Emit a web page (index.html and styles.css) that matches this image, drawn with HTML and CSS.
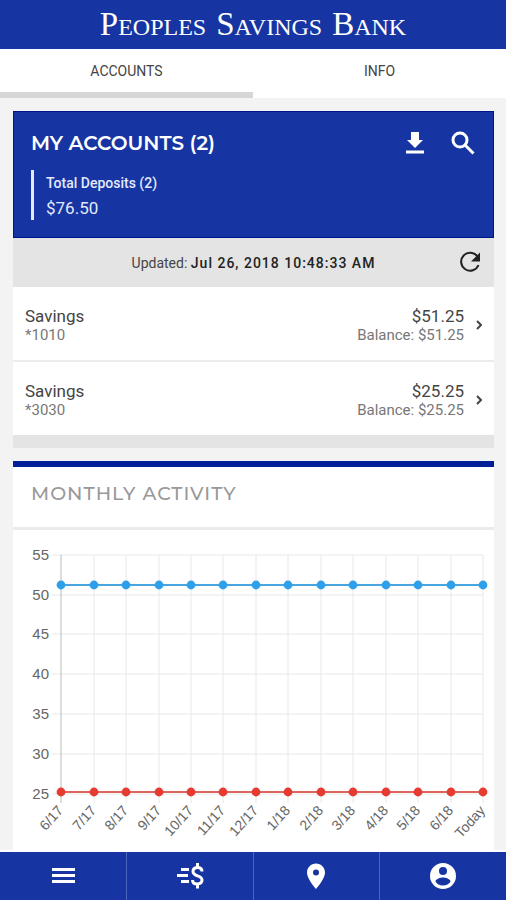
FILE: index.html
```html
<!DOCTYPE html>
<html lang="en">
<head>
<meta charset="utf-8">
<meta name="viewport" content="width=device-width, initial-scale=1">
<title>Peoples Savings Bank</title>
<link rel="stylesheet" href="styles.css">
</head>
<body>
<header class="brand">
  <span><span class="brand-cap">P</span>EOPLES</span>
  <span><span class="brand-cap">S</span>AVINGS</span>
  <span><span class="brand-cap">B</span>ANK</span>
</header>
<nav class="tabs" aria-label="Sections">
  <a class="tab tab-active" href="#accounts">ACCOUNTS</a>
  <a class="tab" href="#info">INFO</a>
</nav>
<main class="content">
  <section class="accounts" id="accounts">
    <div class="summary">
      <div class="summary-head">
        <h1 class="summary-title">MY ACCOUNTS (2)</h1>
        <button class="icon-button" type="button" aria-label="Download">
          <svg class="icon" viewBox="0 0 24 24"><path d="M8 1h8v8h4l-8 8-8-8h4zM3 19.500h18v3H3z"/></svg>
        </button>
        <button class="icon-button" type="button" aria-label="Search">
          <svg class="icon icon-line" viewBox="0 0 24 24"><circle cx="9" cy="9" r="7"/><path d="M14 14l8.500 8.500"/></svg>
        </button>
      </div>
      <div class="totals">
        <div class="totals-label">Total Deposits (2)</div>
        <div class="totals-value">$76.50</div>
      </div>
    </div>
    <div class="updated">
      <p class="updated-text">Updated: <strong class="updated-time">Jul 26, 2018 10:48:33 AM</strong></p>
      <button class="icon-button refresh" type="button" aria-label="Refresh">
        <svg class="icon icon-refresh" viewBox="0 0 24 24"><path class="arc" d="M19.500 5.500A9 9 0 1 0 20.500 14"/><path d="M22 1.500v9h-9z"/></svg>
      </button>
    </div>
    <a class="account" href="#1010">
      <span class="account-side"><span class="account-main">Savings</span><span class="account-sub">*1010</span></span>
      <span class="account-side account-right"><span class="account-main">$51.25</span><span class="account-sub">Balance: $51.25</span></span>
      <svg class="chevron" viewBox="0 0 6 10"><path d="M1 1l4 4-4 4"/></svg>
    </a>
    <a class="account" href="#3030">
      <span class="account-side"><span class="account-main">Savings</span><span class="account-sub">*3030</span></span>
      <span class="account-side account-right"><span class="account-main">$25.25</span><span class="account-sub">Balance: $25.25</span></span>
      <svg class="chevron" viewBox="0 0 6 10"><path d="M1 1l4 4-4 4"/></svg>
    </a>
    <div class="accounts-foot"></div>
  </section>
  <section class="activity">
    <h2 class="activity-title">MONTHLY ACTIVITY</h2>
    <svg class="chart" viewBox="0 0 481 320" role="img" aria-label="Monthly activity">
      <defs>
        <marker id="dot-blue" viewBox="0 0 12 12" refX="6" refY="6" markerWidth="12" markerHeight="12" markerUnits="userSpaceOnUse"><circle class="dot-blue" cx="6" cy="6" r="4.400"/></marker>
        <marker id="dot-red" viewBox="0 0 12 12" refX="6" refY="6" markerWidth="12" markerHeight="12" markerUnits="userSpaceOnUse"><circle class="dot-red" cx="6" cy="6" r="4.400"/></marker>
      </defs>
      <path class="grid" d="M39 25H470M39 65H470M39 104H470M39 144H470M39 184H470M39 224H470M39 264H470M81 25V273M113 25V273M146 25V273M178 25V273M210 25V273M243 25V273M275 25V273M308 25V273M340 25V273M373 25V273M405 25V273M438 25V273M470 25V273"/>
      <path class="axis" d="M48 25V273"/>
      <polyline class="series-blue" points="48,55 81,55 113,55 146,55 178,55 210,55 243,55 275,55 308,55 340,55 373,55 405,55 438,55 470,55"/>
      <polyline class="series-red" points="48,262 81,262 113,262 146,262 178,262 210,262 243,262 275,262 308,262 340,262 373,262 405,262 438,262 470,262"/>
      <g class="y-labels">
        <text x="36" y="30">55</text><text x="36" y="70">50</text><text x="36" y="109">45</text><text x="36" y="149">40</text><text x="36" y="189">35</text><text x="36" y="229">30</text><text x="36" y="269">25</text>
      </g>
      <g class="x-labels">
        <text transform="translate(51 281) rotate(-48)">6/17</text>
        <text transform="translate(84 281) rotate(-48)">7/17</text>
        <text transform="translate(116 281) rotate(-48)">8/17</text>
        <text transform="translate(149 281) rotate(-48)">9/17</text>
        <text transform="translate(181 281) rotate(-48)">10/17</text>
        <text transform="translate(213 281) rotate(-48)">11/17</text>
        <text transform="translate(246 281) rotate(-48)">12/17</text>
        <text transform="translate(278 281) rotate(-48)">1/18</text>
        <text transform="translate(311 281) rotate(-48)">2/18</text>
        <text transform="translate(343 281) rotate(-48)">3/18</text>
        <text transform="translate(376 281) rotate(-48)">4/18</text>
        <text transform="translate(408 281) rotate(-48)">5/18</text>
        <text transform="translate(441 281) rotate(-48)">6/18</text>
        <text transform="translate(473 281) rotate(-48)">Today</text>
      </g>
    </svg>
  </section>
</main>
<nav class="bottom-nav" aria-label="Main">
  <a class="nav-item" href="#menu" aria-label="Menu">
    <svg class="nav-icon" viewBox="0 0 28 28"><path d="M3 6h23v3H3zM3 12h23v3H3zM3 18h23v3H3z"/></svg>
  </a>
  <a class="nav-item" href="#transfer" aria-label="Transfer money">
    <svg class="nav-icon" viewBox="0 0 28 28"><path d="M5 6h8v3H5zM1 12h11v3H1zM5 18h8v3H5z"/><path class="dollar" d="M26 9.500C26 7 24.500 5.500 21.500 5.500S17 7 17 9.500c0 5.600 9 3 9 8.600 0 2.700-2 3.900-4.700 3.900S16.500 21 16.500 18M21.500 1V6M21.500 22v4.500"/></svg>
  </a>
  <a class="nav-item" href="#locations" aria-label="Locations">
    <svg class="nav-icon" viewBox="0 0 28 28"><path fill-rule="evenodd" d="M14 1.500c-5 0-9 4-9 9 0 6.500 9 16.500 9 16.500s9-10 9-16.500c0-5-4-9-9-9zm0 6a3 3 0 1 1 0 6 3 3 0 0 1 0-6z"/></svg>
  </a>
  <a class="nav-item" href="#profile" aria-label="Profile">
    <svg class="nav-icon" viewBox="0 0 28 28"><path fill-rule="evenodd" d="M14 1a13 13 0 1 0 0 26 13 13 0 0 0 0-26zm0 4a4 4 0 1 1 0 8 4 4 0 0 1 0-8zm0 18.500c-3.300 0-6-1.500-7.500-4 0-2.500 5-4 7.500-4s7.500 1.500 7.500 4c-1.500 2.500-4.200 4-7.500 4z"/></svg>
  </a>
</nav>
</body>
</html>
```
FILE: styles.css
```css
* {
  box-sizing: border-box;
}

body {
  margin: 0;
  min-height: 100vh;
  display: flex;
  flex-direction: column;
  background: #f3f3f3;
  color: #444;
  font-family: Roboto, sans-serif;
}

a {
  color: inherit;
  text-decoration: none;
}

.brand {
  display: flex;
  justify-content: center;
  gap: 10px;
  padding: 8px 0 3px;
  background: #1635a2;
  color: #fff;
  font-family: "Liberation Serif", serif;
  font-size: 24px;
  line-height: 38px;
}

.brand-cap {
  font-size: 33px;
  line-height: 1;
}

.tabs {
  display: flex;
  background: #fff;
}

.tab {
  flex: 1;
  padding: 12px 0 11px;
  border-bottom: 6px solid #fff;
  font-size: 14px;
  line-height: 20px;
  text-align: center;
}

.tab-active {
  border-color: #d6d6d6;
}

.content {
  flex: 1;
  display: flex;
  flex-direction: column;
  gap: 13px;
  padding: 13px 12px 0 13px;
}

.summary {
  padding: 16px 18px 17px 17px;
  border: 1px solid #00138f;
  background: #1635a2;
  color: #fff;
}

.summary-head {
  display: flex;
  align-items: center;
  gap: 24px;
}

.summary-title {
  flex: 1;
  margin: 0;
  font-family: Montserrat, Lato, sans-serif;
  font-size: 20px;
  font-weight: 600;
  line-height: 30px;
}

.icon-button {
  display: flex;
  padding: 0;
  border: 0;
  background: none;
  color: inherit;
}

.icon {
  width: 24px;
  height: 24px;
  fill: currentColor;
}

.icon-line {
  fill: none;
  stroke: currentColor;
  stroke-width: 3;
}

.totals {
  margin-top: 12px;
  padding-left: 12px;
  border-left: 3px solid #e4e9fa;
  color: #e4e9fa;
}

.totals-label {
  font-size: 14px;
  font-weight: 500;
  line-height: 26px;
}

.totals-value {
  font-size: 17px;
  line-height: 24px;
}

.updated {
  display: flex;
  align-items: center;
  height: 49px;
  padding: 0 12px;
  background: #e4e4e4;
}

.updated-text {
  flex: 1;
  margin: 0;
  padding-left: 24px;
  font-size: 14px;
  text-align: center;
}

.updated-time {
  color: #222;
  font-weight: 500;
  letter-spacing: 1px;
}

.refresh {
  color: #222;
}

.arc {
  fill: none;
  stroke: currentColor;
  stroke-width: 2;
}

.account {
  display: flex;
  align-items: center;
  padding: 19px 12px 15px;
  background: #fff;
}

.account + .account {
  border-top: 2px solid #ececec;
}

.account-side {
  flex: 1;
  display: flex;
  flex-direction: column;
}

.account-right {
  text-align: right;
}

.account-main {
  font-size: 17px;
  line-height: 20px;
}

.account-sub {
  color: #777;
  font-size: 15px;
  line-height: 19px;
}

.chevron {
  width: 6px;
  height: 10px;
  margin: 0 0 2px 12px;
  fill: none;
  stroke: #444;
  stroke-width: 2;
}

.accounts-foot {
  height: 13px;
  background: #e4e4e4;
}

.activity {
  flex: 1;
  border-top: 6px solid #00209a;
  background: #fff;
}

.activity-title {
  margin: 0;
  padding: 12px 18px 18px;
  border-bottom: 3px solid #ebebeb;
  color: #999;
  font-family: Montserrat, Lato, sans-serif;
  font-size: 19px;
  font-weight: 500;
  letter-spacing: 1px;
  line-height: 30px;
}

.chart {
  display: block;
  width: 100%;
}

.grid,
.axis {
  fill: none;
  stroke: #e8e8e8;
  stroke-width: 1;
}

.axis {
  stroke: #bbb;
}

.series-blue,
.series-red {
  fill: none;
  stroke-width: 2;
}

.series-blue {
  stroke: #48a5e0;
  marker: url(#dot-blue);
}

.series-red {
  stroke: #df6660;
  marker: url(#dot-red);
}

.dot-blue {
  fill: #2e9fea;
}

.dot-red {
  fill: #e53b30;
}

.y-labels,
.x-labels {
  fill: #666;
  text-anchor: end;
}

.y-labels {
  font-family: "Liberation Sans", sans-serif;
  font-size: 15px;
}

.x-labels {
  font-family: "Liberation Sans", sans-serif;
  font-size: 14px;
}

.bottom-nav {
  display: flex;
  border-top: 2px solid #fff;
  background: #1635a2;
  color: #fff;
}

.nav-item {
  flex: 1;
  display: flex;
  justify-content: center;
  padding: 10px 0;
}

.nav-item:not(:last-child) {
  border-right: 1px solid #4d66bd;
}

.nav-icon {
  width: 28px;
  height: 28px;
  fill: currentColor;
}

.dollar {
  fill: none;
  stroke: currentColor;
  stroke-width: 3;
}
```
